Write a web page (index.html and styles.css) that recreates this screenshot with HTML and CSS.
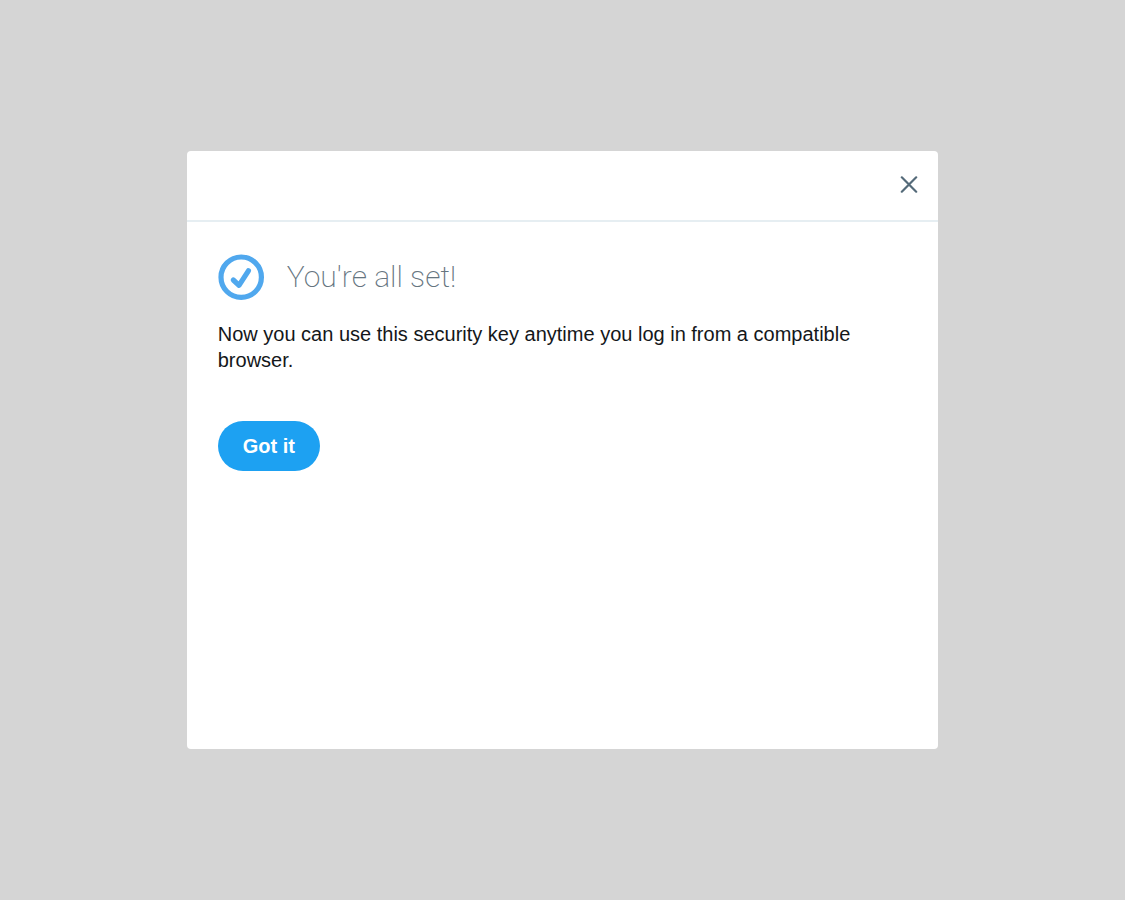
FILE: index.html
```html
<!DOCTYPE html>
<html lang="en">
<head>
<meta charset="utf-8">
<meta name="viewport" content="width=device-width, initial-scale=1">
<title>Security key</title>
<link rel="stylesheet" href="styles.css">
</head>
<body>
<main class="dialog" role="dialog" aria-labelledby="dialog-title">
  <header class="dialog-header">
    <button class="close" type="button" aria-label="Close">
      <svg width="18" height="18" viewBox="0 0 18 18" aria-hidden="true"><path d="M1.8 2.3 16.2 16.7M16.2 2.3 1.8 16.7"/></svg>
    </button>
  </header>
  <div class="dialog-body">
    <div class="title-row">
      <svg class="check" width="46" height="46" viewBox="0 0 46 46" aria-hidden="true">
        <circle cx="23.2" cy="23.2" r="20.2"/>
        <path d="M15.3 26 21 31.3 30.4 16.8"/>
      </svg>
      <h1 class="title" id="dialog-title">You're all set!</h1>
    </div>
    <p class="message">Now you can use this security key anytime you log in from a compatible browser.</p>
    <button class="confirm" type="button">Got it</button>
  </div>
</main>
</body>
</html>
```
FILE: styles.css
```css
* {
  box-sizing: border-box;
}

body {
  margin: 0;
  min-height: 100vh;
  display: grid;
  place-items: center;
  background: #d5d5d5;
  font-family: "Liberation Sans", Arial, sans-serif;
}

.dialog {
  width: 66.8%;
  min-height: 598px;
  background: #fff;
  border-radius: 4px;
}

.dialog-header {
  display: flex;
  justify-content: flex-end;
  align-items: center;
  height: 71px;
  padding: 0 20px 4px;
  border-bottom: 2px solid #e6eef2;
}

.close {
  display: flex;
  padding: 0;
  border: 0;
  background: none;
  cursor: pointer;
}

.close path {
  fill: none;
  stroke: #546a79;
  stroke-width: 2.2;
  stroke-linecap: round;
}

.dialog-body {
  padding: 32px 31px;
}

.title-row {
  display: flex;
  align-items: center;
  gap: 23px;
}

.check {
  fill: none;
  stroke: #50a8ee;
  stroke-width: 5.2;
  stroke-linecap: round;
  stroke-linejoin: round;
}

.title {
  margin: 0;
  font-family: Roboto, "Liberation Sans", sans-serif;
  font-weight: 200;
  font-size: 30px;
  line-height: 36px;
  color: #66757f;
}

.message {
  margin: 21px 0 48px;
  font-size: 20px;
  line-height: 26px;
  color: #14171a;
}

.confirm {
  height: 50px;
  padding: 1px 25px 0;
  border: 0;
  border-radius: 25px;
  background: #1da1f2;
  color: #fff;
  font: bold 20px "Liberation Sans", Arial, sans-serif;
  cursor: pointer;
}
```
